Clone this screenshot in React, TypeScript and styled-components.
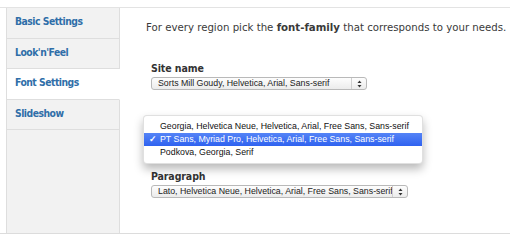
import React from "react";
import styled, { createGlobalStyle } from "styled-components";

const Global = createGlobalStyle`
  html, body { margin: 0; padding: 0; background: #fff; }
  body { font-family: "DejaVu Sans", "Open Sans", sans-serif; }
`;

const Page = styled.div`
  padding-top: 7px;
  width: 510px;
  height: 242px;
  box-sizing: border-box;
  overflow: hidden;
`;

const Frame = styled.div`
  display: flex;
  height: 227px;
  box-sizing: border-box;
  border-top: 1px solid #e3e3e3;
  border-bottom: 1px solid #dcdcdc;
`;

const Sidebar = styled.nav`
  margin-left: 6px;
  width: 114px;
  flex: none;
  display: flex;
  flex-direction: column;
  border-left: 1px solid #dedede;
  box-sizing: border-box;
`;

const Tab = styled.div<{ $active?: boolean }>`
  height: 30.5px;
  box-sizing: border-box;
  padding: 7px 0 0 8px;
  font-family: "DejaVu Sans Condensed", "DejaVu Sans", sans-serif;
  font-size: 10.3px;
  letter-spacing: -0.5px;
  font-weight: bold;
  color: #2f6ea8;
  background: ${(p) => (p.$active ? "#fff" : "#f2f2f2")};
  border-bottom: 1px solid #dedede;
  border-right: 1px solid ${(p) => (p.$active ? "transparent" : "#dedede")};
`;

const Filler = styled.div`
  flex: 1;
  background: #f2f2f2;
  border-right: 1px solid #dedede;
`;

const Content = styled.main`
  flex: 1;
  padding: 13px 0 0 26px;
  color: #333;
`;

const Intro = styled.p`
  margin: 0 0 26px;
  font-size: 10.2px;
  line-height: 14px;
  white-space: nowrap;
  color: #3a3a3a;
`;

const Field = styled.div<{ $covered?: boolean }>`
  position: relative;
  margin-left: 5px;
  height: 54px;
  display: flex;
  flex-direction: column;
  align-items: flex-start;
  & > .under {
    visibility: ${(p) => (p.$covered ? "hidden" : "visible")};
  }
`;

const Label = styled.div`
  font-family: "DejaVu Sans Condensed", "DejaVu Sans", sans-serif;
  font-size: 10.5px;
  font-weight: bold;
  line-height: 14px;
  min-height: 14px;
  color: #333;
  letter-spacing: -0.1px;
`;

const Select = styled.div<{ $w: number }>`
  margin-top: 2px;
  width: ${(p) => p.$w}px;
  height: 13px;
  box-sizing: border-box;
  display: flex;
  align-items: stretch;
  border: 1px solid #b9b9b9;
  border-radius: 3px;
  background: linear-gradient(#fdfdfd, #ececec);
  font-family: "Liberation Sans", Arial, sans-serif;
  font-size: 8.8px;
  color: #222;
`;

const SelectText = styled.span`
  flex: 1;
  padding-left: 6px;
  line-height: 11px;
  white-space: nowrap;
  overflow: hidden;
`;

const Stepper = styled.span`
  width: 14px;
  border-left: 1px solid #cfcfcf;
  display: flex;
  align-items: center;
  justify-content: center;
`;

const Menu = styled.div`
  position: absolute;
  left: -8px;
  top: 0px;
  width: 280px;
  padding: 4px 0;
  box-sizing: border-box;
  background: #fff;
  border: 1px solid rgba(0, 0, 0, 0.12);
  border-radius: 4px;
  box-shadow: 0 5px 10px rgba(0, 0, 0, 0.28);
  font-family: "Liberation Sans", Arial, sans-serif;
  font-size: 8.8px;
  color: #111;
  z-index: 2;
`;

const Item = styled.div<{ $on?: boolean }>`
  position: relative;
  height: 13px;
  line-height: 13px;
  padding-left: 16px;
  white-space: nowrap;
  color: ${(p) => (p.$on ? "#fff" : "#111")};
  background: ${(p) => (p.$on ? "linear-gradient(#5584f6, #2f62f0)" : "transparent")};
`;

const Check = styled.span`
  position: absolute;
  left: 5px;
  top: 0;
  font-weight: bold;
`;

const Arrows = () => (
  <svg width="5" height="8" viewBox="0 0 5 8">
    <path d="M2.5 0.5 L4.5 3 H0.5 Z" fill="#333" />
    <path d="M2.5 7.5 L4.5 5 H0.5 Z" fill="#333" />
  </svg>
);

const menuItems = [
  "Georgia, Helvetica Neue, Helvetica, Arial, Free Sans, Sans-serif",
  "PT Sans, Myriad Pro, Helvetica, Arial, Free Sans, Sans-serif",
  "Podkova, Georgia, Serif",
];

export default function App() {
  return (
    <>
      <Global />
      <Page>
        <Frame>
          <Sidebar>
            <Tab>Basic Settings</Tab>
            <Tab>Look'n'Feel</Tab>
            <Tab $active>Font Settings</Tab>
            <Tab>Slideshow</Tab>
            <Filler />
          </Sidebar>
          <Content>
            <Intro>
              For every region pick the <b>font-family</b> that corresponds to your needs.
            </Intro>
            <Field>
              <Label>Site name</Label>
              <Select $w={216}>
                <SelectText>Sorts Mill Goudy, Helvetica, Arial, Sans-serif</SelectText>
                <Stepper><Arrows /></Stepper>
              </Select>
            </Field>
            <Field $covered>
              <Label className="under" />
              <Select className="under" $w={272}>
                <SelectText />
                <Stepper><Arrows /></Stepper>
              </Select>
              <Menu>
                {menuItems.map((m, i) => (
                  <Item key={m} $on={i === 1}>
                    {i === 1 && <Check>✓</Check>}
                    {m}
                  </Item>
                ))}
              </Menu>
            </Field>
            <Field>
              <Label>Paragraph</Label>
              <Select $w={257}>
                <SelectText>Lato, Helvetica Neue, Helvetica, Arial, Free Sans, Sans-serif</SelectText>
                <Stepper><Arrows /></Stepper>
              </Select>
            </Field>
          </Content>
        </Frame>
      </Page>
    </>
  );
}
